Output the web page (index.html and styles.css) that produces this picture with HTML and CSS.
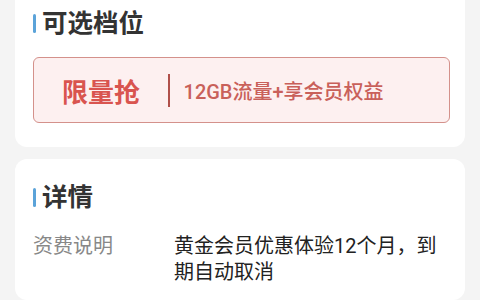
FILE: index.html
```html
<!DOCTYPE html>
<html lang="zh-CN">
<head>
<meta charset="utf-8">
<link rel="stylesheet" href="styles.css">
</head>
<body>
<div class="page">
  <section class="card card-top">
    <h2 class="title"><span class="bar"></span>可选档位</h2>
    <div class="option">
      <span class="option-name">限量抢</span>
      <span class="divider"></span>
      <span class="option-desc">12GB流量+享会员权益</span>
    </div>
  </section>
  <section class="card card-detail">
    <h2 class="title"><span class="bar"></span>详情</h2>
    <div class="row">
      <div class="label">资费说明</div>
      <div class="value">黄金会员优惠体验12个月，到期自动取消</div>
    </div>
  </section>
</div>
</body>
</html>
```

FILE: styles.css
```css
html, body {
  margin: 0;
  padding: 0;
  background: #f4f4f4;
  font-family: Roboto, "Noto Sans CJK SC", "Noto Sans", sans-serif;
}
.page {
  width: 480px;
  height: 300px;
  overflow: hidden;
  display: flex;
  flex-direction: column;
  gap: 12px;
}
.card {
  margin: 0 15px;
  background: #ffffff;
  border-radius: 12px;
  padding: 0 15px 0 18px;
}
.card-top {
  margin-top: -12px;
  padding-top: 19px;
  padding-bottom: 24px;
}
.card-detail {
  padding-top: 22px;
  flex: 1;
}
.title {
  margin: 0;
  display: flex;
  align-items: center;
  gap: 6px;
  font-size: 25.5px;
  line-height: 32px;
  font-weight: 700;
  color: #333333;
}
.bar {
  width: 3px;
  height: 19px;
  border-radius: 1.5px;
  background: #5ba3d9;
}
.option {
  margin-top: 18px;
  height: 64px;
  box-sizing: content-box;
  border: 1.5px solid #d4918b;
  border-radius: 6px;
  background: #fdf0f0;
  display: flex;
  align-items: center;
  padding-left: 28px;
}
.option-name {
  font-size: 26px;
  font-weight: 700;
  color: #d9544f;
}
.divider {
  width: 1.5px;
  height: 33px;
  margin: 0 14px 0 28px;
  background: #b0504a;
}
.option-desc {
  font-size: 20px;
  font-weight: 500;
  color: #c9605a;
}
.row {
  margin-top: 20px;
  display: flex;
  font-size: 20px;
  line-height: 26px;
}
.label {
  width: 141px;
  flex: none;
  color: #888888;
}
.value {
  width: 272px;
  color: #222222;
}
```
